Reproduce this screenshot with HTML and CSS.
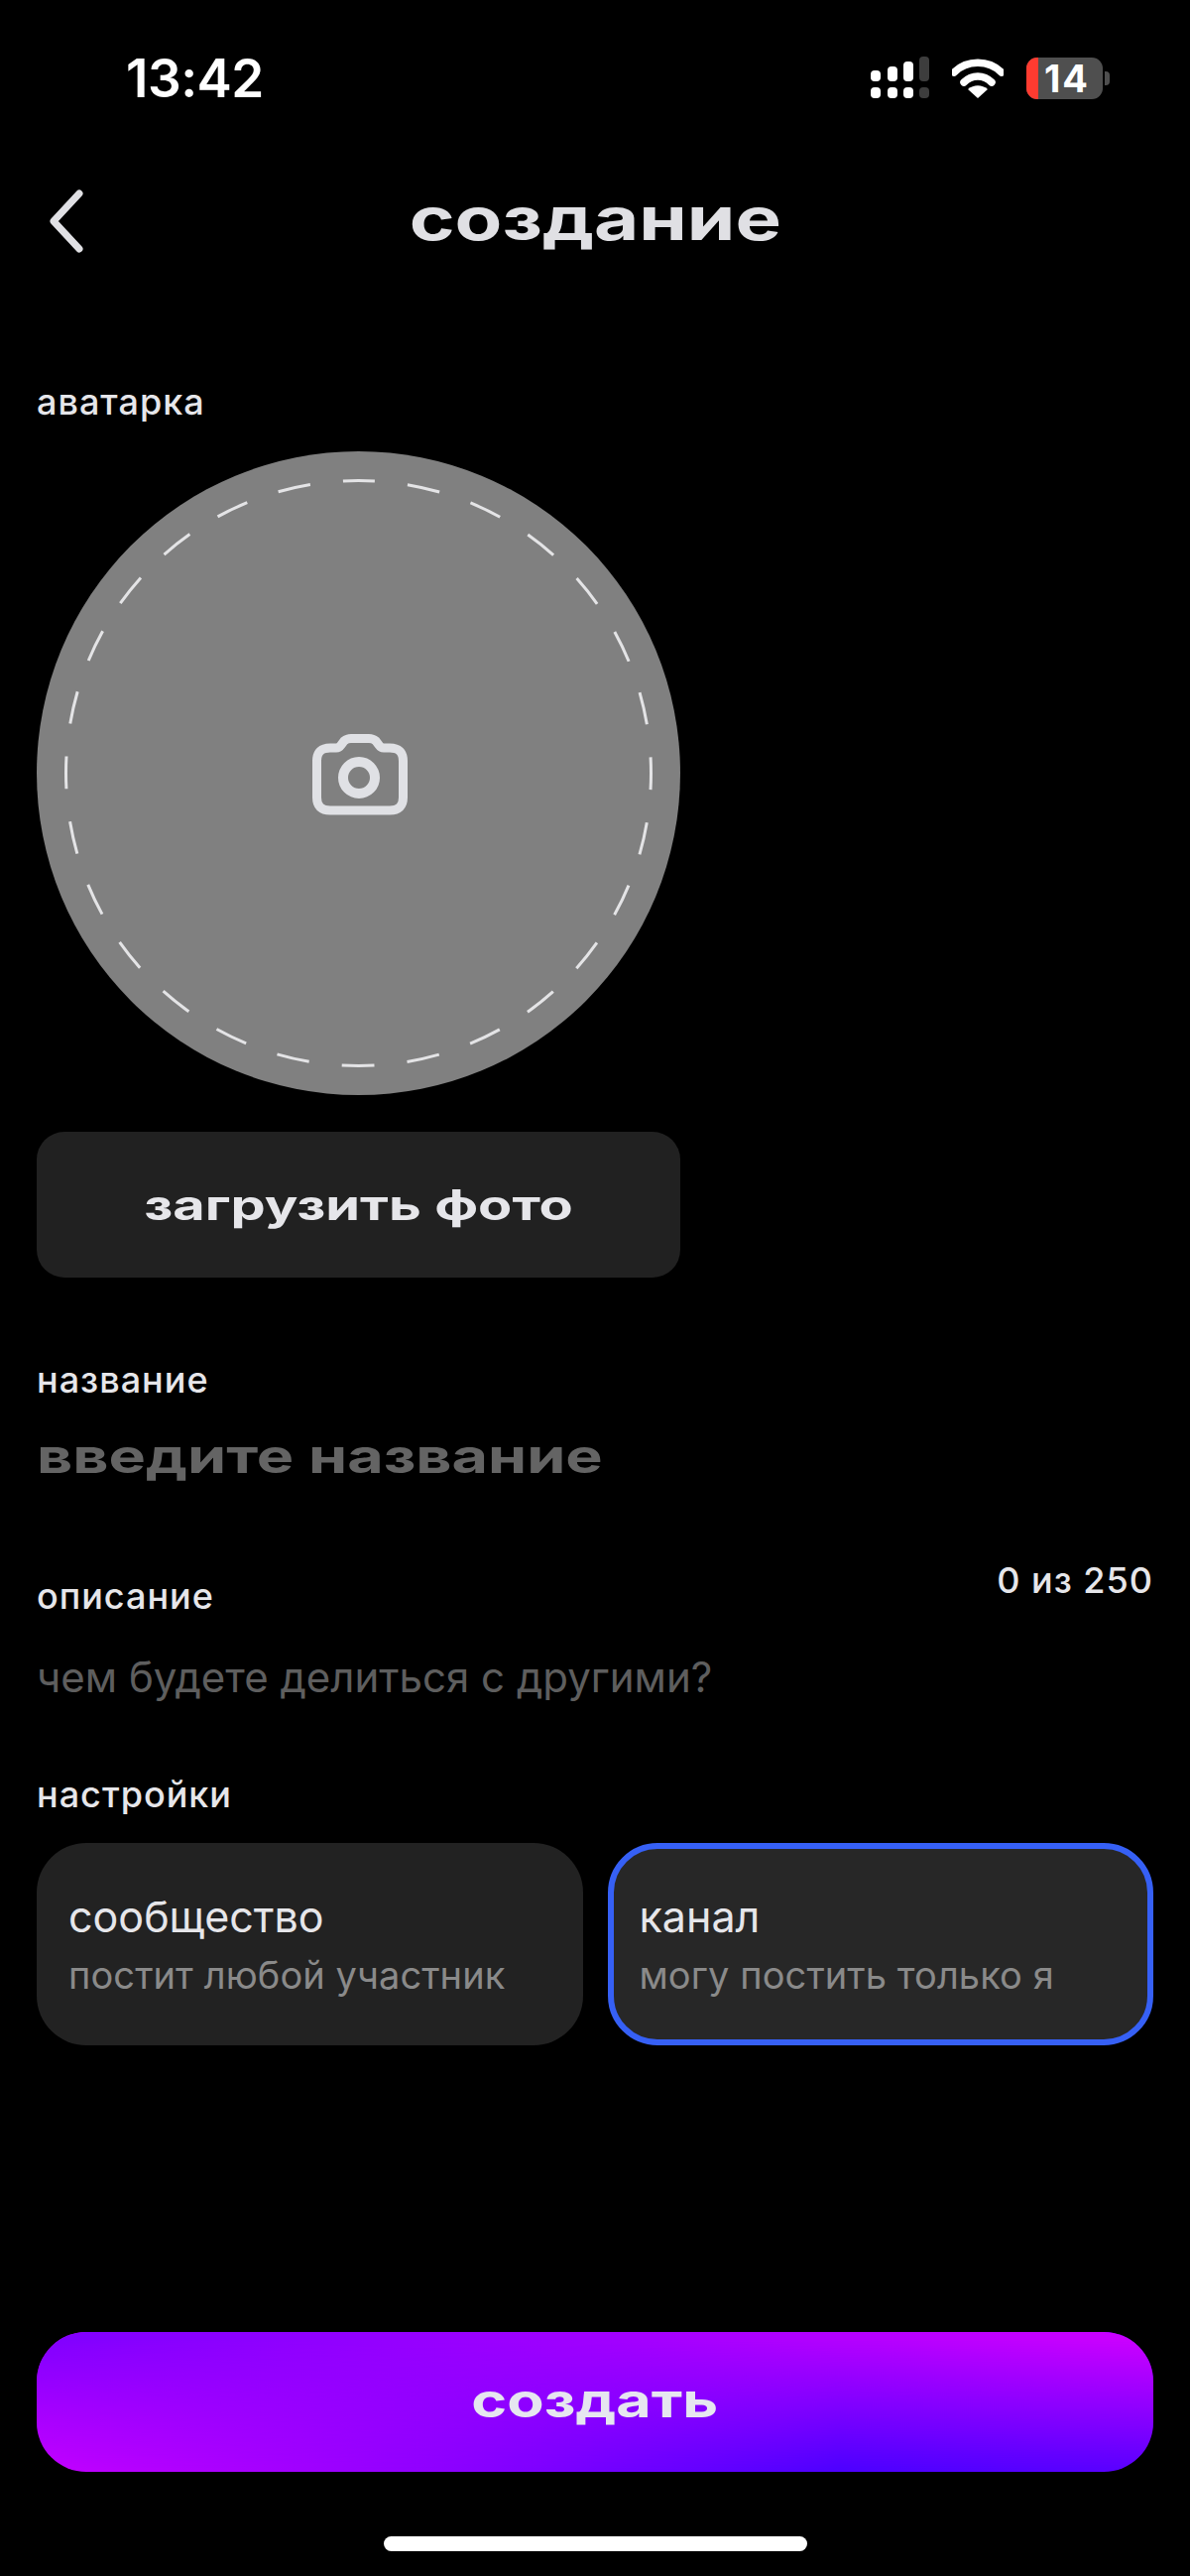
FILE: index.html
```html
<!doctype html>
<html lang="ru">
<head>
  <meta charset="UTF-8">
  <title>создание</title>
  <meta name="viewport" content="width=device-width, initial-scale=1.0">
  <link rel="stylesheet" href="styles.css">
</head>
<body>
  <div class="statusBar">
    <div class="time">13:42</div>
    <div class="statusIcons">
      <svg class="signal" width="60" height="44" viewBox="0 0 60 44">
        <rect x="0" y="14" width="10" height="11" rx="4" fill="#fff"/>
        <rect x="17" y="10" width="10" height="15" rx="4" fill="#fff"/>
        <rect x="33" y="5" width="10" height="20" rx="4" fill="#fff"/>
        <rect x="49" y="0" width="10" height="25" rx="4" fill="#3d3d3d"/>
        <rect x="0" y="31" width="10" height="11" rx="4" fill="#fff"/>
        <rect x="17" y="31" width="10" height="11" rx="4" fill="#fff"/>
        <rect x="33" y="31" width="10" height="11" rx="4" fill="#fff"/>
        <rect x="49" y="31" width="10" height="11" rx="4" fill="#3d3d3d"/>
      </svg>
      <svg class="wifi" width="52" height="40" viewBox="0 0 52 40">
        <path d="M2 14 C15 1 37 1 50 14" fill="none" stroke="#fff" stroke-width="7.5" stroke-linecap="round"/>
        <path d="M12 24 C20 16 32 16 40 24" fill="none" stroke="#fff" stroke-width="7.5" stroke-linecap="round"/>
        <path d="M16 31 C22 26 30 26 36 31 L26 40 Z" fill="#fff"/>
      </svg>
      <div class="battery">
        <div class="batteryLow"></div>
        <div class="batteryText">14</div>
      </div>
      <div class="batteryCap"></div>
    </div>
  </div>

  <div class="header">
    <svg class="backIcon" width="36" height="64" viewBox="0 0 36 64">
      <path d="M31 4 L5 32 L31 60" fill="none" stroke="#e0e0e4" stroke-width="7" stroke-linecap="round" stroke-linejoin="round"/>
    </svg>
    <h1 class="title wide">создание</h1>
  </div>

  <div class="content">
    <div class="label avatarLabel">аватарка</div>
    <div class="avatar">
      <svg class="avatarRing" width="649" height="649" viewBox="0 0 649 649">
        <circle cx="324.5" cy="324.5" r="295" fill="none" stroke="#e4e4e6" stroke-width="3" stroke-dasharray="33 33.2" stroke-dashoffset="16.5" transform="rotate(-90 324.5 324.5)"/>
      </svg>
      <svg class="cameraIcon" width="96" height="82" viewBox="0 0 96 82">
        <path d="M18 14 H24 Q27 14 29 11 L32 7 Q35 4.500 39 4.500 H57 Q61 4.500 64 7 L67 11 Q69 14 72 14 H78 Q91.500 14 91.500 27 V64 Q91.500 77 78 77 H18 Q4.500 77 4.500 64 V27 Q4.500 14 18 14 Z" fill="none" stroke="#e0e1e5" stroke-width="9" stroke-linejoin="round"/>
        <circle cx="47" cy="44" r="16" fill="none" stroke="#e0e1e5" stroke-width="10"/>
      </svg>
    </div>
    <div class="uploadBtn"><span class="wide">загрузить фото</span></div>

    <div class="label nameLabel">название</div>
    <div class="namePlaceholder"><span class="wide">введите название</span></div>

    <div class="descRow">
      <div class="label descLabel">описание</div>
      <div class="counter">0 из 250</div>
    </div>
    <div class="descPlaceholder">чем будете делиться с другими?</div>

    <div class="label settingsLabel">настройки</div>
    <div class="options">
      <div class="option">
        <div class="optionTitle">сообщество</div>
        <div class="optionSub">постит любой участник</div>
      </div>
      <div class="option selected">
        <div class="optionTitle">канал</div>
        <div class="optionSub">могу постить только я</div>
      </div>
    </div>

    <div class="createBtn"><span class="wide">создать</span></div>
  </div>

  <div class="homeBar"></div>
</body>
</html>
```

FILE: styles.css
```css
html, body {
  height: 100%;
}

body {
  margin: 0;
  background: #000;
  color: #e0e0e4;
  font-family: Inter, "Liberation Sans", sans-serif;
  display: flex;
  flex-direction: column;
  overflow: hidden;
}

.statusBar {
  height: 158px;
  flex: none;
  display: flex;
  justify-content: space-between;
  align-items: center;
  box-sizing: border-box;
  padding: 0 81px 0 127px;
}

.time {
  font-family: Inter, sans-serif;
  font-size: 53px;
  font-weight: 600;
  color: #fff;
  letter-spacing: -0.5px;
}

.statusIcons {
  display: flex;
  align-items: center;
}

.signal { margin-right: 22px; }
.wifi { margin-right: 23px; }

.battery {
  position: relative;
  width: 77px;
  height: 42px;
  border-radius: 11px;
  background: #4f4f4f;
  display: flex;
  justify-content: center;
  align-items: center;
}

.batteryLow {
  position: absolute;
  left: 0;
  top: 0;
  bottom: 0;
  width: 12px;
  border-radius: 11px 0 0 11px;
  background: #ff3b30;
}

.batteryText {
  position: relative;
  font-size: 38px;
  line-height: 38px;
  font-weight: 700;
  color: #fff;
  letter-spacing: 2px;
  padding-left: 5px;
}

.batteryCap {
  width: 5px;
  height: 14px;
  margin-left: 2px;
  background: #4f4f4f;
  border-radius: 0 4px 4px 0;
}

.header {
  height: 124px;
  flex: none;
  position: relative;
  display: flex;
  justify-content: center;
  align-items: center;
}

.backIcon {
  position: absolute;
  left: 49px;
  top: 33px;
}

.wide {
  display: inline-block;
  transform: scaleX(1.3);
  font-weight: 700;
  white-space: nowrap;
}

.title {
  margin: 0;
  font-size: 60px;
  line-height: 70px;
  color: #e0e0e4;
}

.content {
  flex: 1;
  display: flex;
  flex-direction: column;
  padding: 0 37px;
}

.label {
  font-size: 36px;
  font-weight: 500;
  line-height: 40px;
  letter-spacing: 1px;
  color: #e6e6ea;
}

.avatarLabel { margin-top: 103px; }

.avatar {
  position: relative;
  width: 649px;
  height: 649px;
  margin-top: 30px;
  border-radius: 50%;
  background: #808080;
  display: flex;
  justify-content: center;
  align-items: center;
}

.avatarRing {
  position: absolute;
  left: 0;
  top: 0;
}

.cameraIcon {
  margin-left: 3px;
  margin-top: 3px;
}

.uploadBtn {
  width: 649px;
  height: 147px;
  margin-top: 37px;
  border-radius: 28px;
  background: #212121;
  display: flex;
  justify-content: center;
  align-items: center;
  font-size: 42px;
  color: #e6e6ea;
}

.uploadBtn .wide {
  transform: scaleX(1.33);
}

.nameLabel { margin-top: 83px; }

.namePlaceholder {
  margin-top: 27px;
  font-size: 48px;
  line-height: 60px;
  color: #646464;
}

.namePlaceholder .wide {
  transform: scaleX(1.31);
  transform-origin: left center;
}

.descRow {
  display: flex;
  justify-content: space-between;
  margin-top: 75px;
}

.descLabel { margin-top: 16px; }

.counter {
  font-size: 36px;
  font-weight: 500;
  line-height: 40px;
  letter-spacing: 1px;
  color: #e6e6ea;
}

.descPlaceholder {
  margin-top: 37px;
  font-size: 42px;
  line-height: 50px;
  color: #5e5e5e;
}

.settingsLabel { margin-top: 73px; }

.options {
  display: flex;
  gap: 25px;
  margin-top: 29px;
}

.option {
  flex: 1;
  height: 204px;
  box-sizing: border-box;
  padding: 49px 32px 0;
  border-radius: 50px;
  background: #222;
}

.option.selected {
  background: #272727;
  border: 6px solid #3660f5;
  padding: 43px 26px 0;
}

.optionTitle {
  font-size: 43px;
  line-height: 50px;
  color: #e6e6ea;
}

.optionSub {
  margin-top: 12px;
  font-size: 38px;
  line-height: 44px;
  letter-spacing: 0.1px;
  color: #8a8a8a;
}

.createBtn {
  position: relative;
  margin-top: auto;
  height: 141px;
  box-sizing: border-box;
  padding-bottom: 5px;
  border-radius: 50px;
  overflow: hidden;
  background: linear-gradient(90deg, #c400ff 0%, #9000ff 35%, #4c00ff 72%, #5a00ff 100%);
  display: flex;
  justify-content: center;
  align-items: center;
  font-size: 47px;
  color: #e6e6f0;
}

/* top edge of the gradient, faded out towards the bottom */
.createBtn::before {
  content: "";
  position: absolute;
  inset: 0;
  background: linear-gradient(90deg, #8000ff 0%, #a000ff 50%, #cc00ff 100%);
  -webkit-mask-image: linear-gradient(to bottom, #000 5%, transparent 100%);
  mask-image: linear-gradient(to bottom, #000 5%, transparent 100%);
}

.createBtn .wide {
  position: relative;
}

.homeBar {
  flex: none;
  width: 427px;
  height: 15px;
  margin: 65px auto 25px;
  border-radius: 8px;
  background: #fff;
}
```
